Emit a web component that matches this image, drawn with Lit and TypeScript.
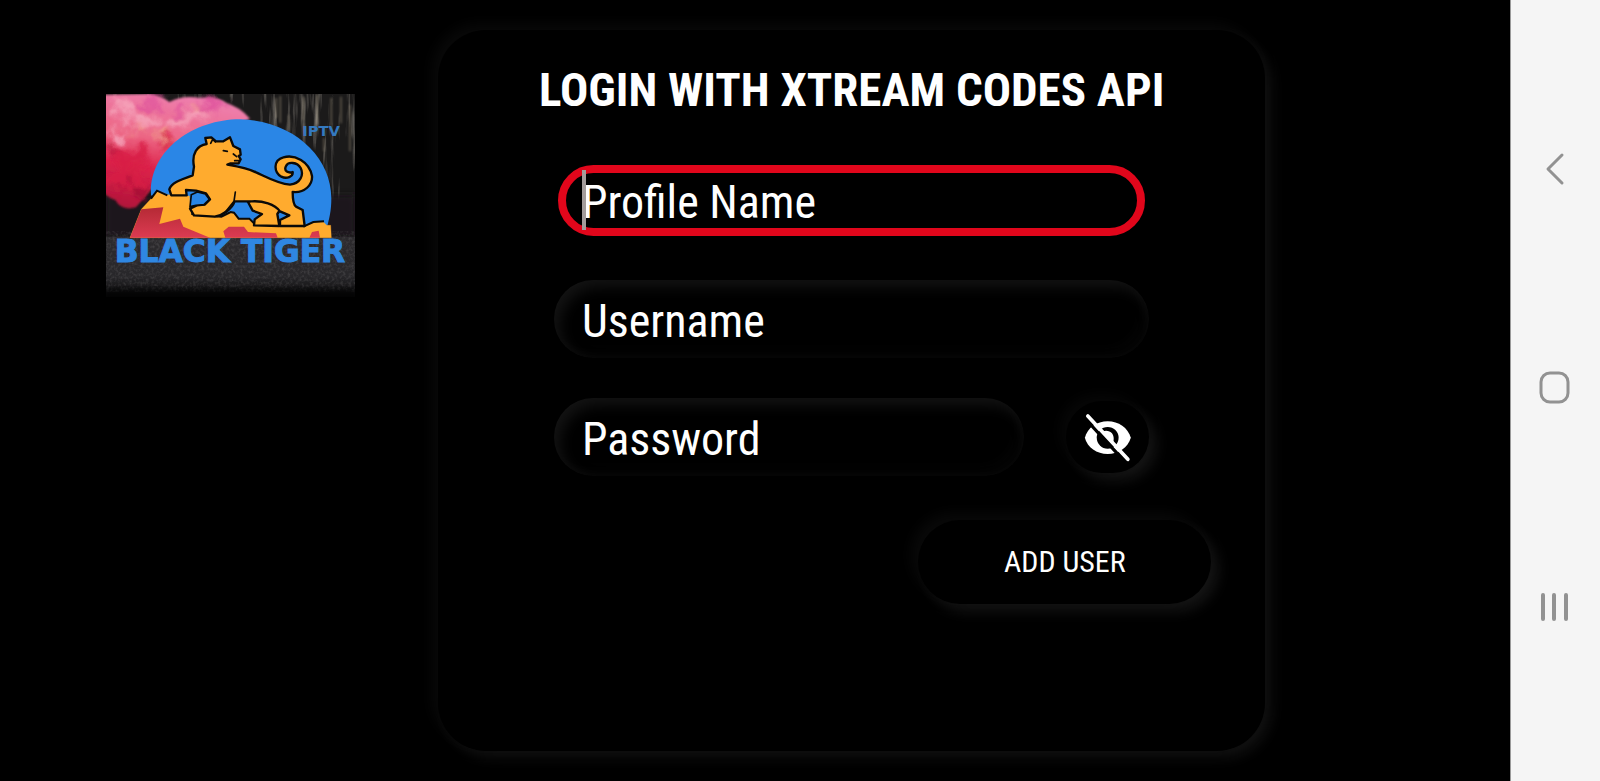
import { LitElement, html, css, svg } from "lit";
import { customElement, state } from "lit/decorators.js";

@customElement("brand-logo")
class BrandLogo extends LitElement {
  static styles = css`
    :host { display: block; }
    svg { display: block; width: 100%; height: auto; }
    .word { font-family: "DejaVu Sans", sans-serif; font-weight: 700; fill: #2f87e2; }
    .name { font-size: 94px; stroke: #2f87e2; stroke-width: 3; }
    .tag { font-size: 44px; fill: #3479bf; }
  `;

  render() {
    return html`<svg viewBox="30 28 747 609" role="img" aria-label="Black Tiger IPTV">
      ${svg`
      <defs>
        <linearGradient id="ground" x1="0" y1="0" x2="0" y2="1">
          <stop offset="0" stop-color="#2c2a2d"/><stop offset=".65" stop-color="#28272a"/><stop offset="1" stop-color="#0b0b0c"/>
        </linearGradient>
        <linearGradient id="smoke" x1=".5" y1="0" x2=".25" y2="1">
          <stop offset="0" stop-color="#ee7fae"/><stop offset=".4" stop-color="#ec6684"/>
          <stop offset=".65" stop-color="#dd234b"/><stop offset="1" stop-color="#b3163b"/>
        </linearGradient>
        <linearGradient id="rock" x1="0" y1="0" x2="0" y2="1">
          <stop offset="0" stop-color="#b52a35"/><stop offset="1" stop-color="#dc3b52"/>
        </linearGradient>
        <filter id="soft" x="-20%" y="-20%" width="140%" height="140%"><feGaussianBlur stdDeviation="9"/></filter>
        <filter id="edge" x="-10%" y="-10%" width="120%" height="120%"><feGaussianBlur stdDeviation="3"/></filter>
        <filter id="billow" x="-20%" y="-20%" width="140%" height="140%">
          <feGaussianBlur stdDeviation="9" result="b"/>
          <feTurbulence type="fractalNoise" baseFrequency=".018" numOctaves="3" seed="12"/>
          <feDisplacementMap in="b" scale="90" xChannelSelector="R" yChannelSelector="G"/>
        </filter>
        <filter id="bark" x="0" y="0" width="100%" height="100%">
          <feTurbulence type="fractalNoise" baseFrequency=".06 .006" numOctaves="3" seed="4"/>
          <feColorMatrix values="0 0 0 0 .5  0 0 0 0 .46  0 0 0 0 .4  2.6 0 0 0 -1.4"/>
          <feGaussianBlur stdDeviation="1.5"/>
        </filter>
        <filter id="grit" x="0" y="0" width="100%" height="100%">
          <feTurbulence type="fractalNoise" baseFrequency=".12" numOctaves="2" seed="9"/>
          <feColorMatrix values="0 0 0 0 .5  0 0 0 0 .48  0 0 0 0 .48  1.2 0 0 0 -.5"/>
          <feGaussianBlur stdDeviation="2"/>
        </filter>
        <clipPath id="frame"><rect x="30" y="28" width="747" height="609"/></clipPath>
      </defs>
      <g clip-path="url(#frame)">
        <rect x="30" y="28" width="747" height="432" fill="#1b1a1a"/>
        <rect x="400" y="28" width="377" height="330" filter="url(#bark)" opacity=".6"/>
        <rect x="30" y="28" width="400" height="60" filter="url(#bark)" opacity=".4"/>
        <g stroke="#b9ab90" stroke-width="4" opacity=".5" filter="url(#edge)">
          <path d="M541 40v60M553 34v80M622 36v70M664 30v90M706 40v85M735 36v80M762 60v140M684 160v40M578 90v50"/>
        </g>
        <rect x="30" y="330" width="747" height="130" fill="#1a191b" filter="url(#soft)"/>
        <rect x="30" y="456" width="747" height="181" fill="url(#ground)"/>
        <rect x="30" y="440" width="747" height="180" filter="url(#grit)" opacity=".3"/>
        <path d="M70 340v110" stroke="#5a3e4c" stroke-width="16" filter="url(#soft)" opacity=".7"/>
        <path d="M20 30L160 28Q200 34 220 52Q262 30 310 40Q370 36 392 56Q430 66 462 102L400 130L240 200L170 310L120 368Q76 380 58 346Q36 340 20 320Z" fill="url(#smoke)" filter="url(#edge)"/>
        <g filter="url(#billow)" opacity=".85">
          <g fill="#f6a6bb"><ellipse cx="90" cy="76" rx="46" ry="24"/><ellipse cx="150" cy="112" rx="34" ry="20"/><ellipse cx="240" cy="112" rx="38" ry="18"/><ellipse cx="62" cy="150" rx="34" ry="22"/><ellipse cx="300" cy="96" rx="34" ry="16"/></g>
          <g fill="#f3a08f"><ellipse cx="205" cy="150" rx="26" ry="14"/><ellipse cx="310" cy="72" rx="22" ry="10"/><ellipse cx="130" cy="140" rx="20" ry="10"/></g>
          <g fill="#de4f9b"><ellipse cx="170" cy="56" rx="26" ry="12"/><ellipse cx="350" cy="66" rx="40" ry="16"/><ellipse cx="246" cy="78" rx="22" ry="10"/></g>
          <g fill="#d81f45"><ellipse cx="214" cy="172" rx="24" ry="16"/><ellipse cx="100" cy="222" rx="56" ry="26"/><ellipse cx="90" cy="280" rx="60" ry="34"/></g>
          <g fill="#a30f34"><ellipse cx="120" cy="306" rx="36" ry="18"/><ellipse cx="60" cy="200" rx="22" ry="7"/></g>
        </g>
        <path d="M165 330C158 200 290 104 432 104C592 108 706 216 706 340C706 380 700 400 690 440H240Z" fill="#2a86e6"/>
        <path d="M102 459L136 374L165 342L183 318L214 330L280 334L286 388L380 396L404 382L414 384L428 402L460 402L476 418L622 426L652 412L680 410L692 422H704L706 459Z" fill="#ffab2e" stroke="#ffab2e"/>
        <path d="M102 459L136 374L202 368L190 418L252 402L262 426L342 459ZM382 440L398 426H444L456 442L540 446L545 459H388ZM640 459L648 442L668 438L672 459Z" fill="url(#rock)"/>
        <path d="M165 342L183 318L214 332M286 388L376 396L404 382L414 384L428 402L460 402L476 418M622 426L652 412L684 410" fill="none" stroke="#0b0a08" stroke-width="6"/>
        <g fill="#ffab2e" stroke="#0b0a08" stroke-width="7" stroke-linejoin="round" stroke-linecap="round">
          <path d="M456 352L470 378L498 388L476 404L474 422L550 424L544 388L552 376L520 330Z"/>
          <path d="M328 160L346 158L360 170L382 170L402 158L412 184L432 194L434 210L428 214L434 224L428 236L404 236L394 240C430 246 460 252 482 264C516 280 548 298 582 300C614 296 624 270 614 250C604 232 576 230 570 244C562 260 578 266 590 262C592 276 572 284 556 276C532 262 532 226 562 218C596 208 640 230 648 274C650 300 626 326 590 322C590 340 592 360 600 366L620 376L626 424L552 424L552 406L580 392L552 380C536 358 500 348 468 350L416 350C408 372 382 392 356 396L294 392L282 372L302 362L326 360L342 344L330 326L300 318L270 316L272 332L226 332L220 314C226 296 250 286 290 272L294 246C286 206 304 182 332 178Z"/>
          <path d="M418 322L414 350L388 382M344 176L350 164L358 172M382 198L394 200M412 208L422 216M416 228H428" fill="none" stroke-width="5"/>
        </g>
        <path d="M286 330L304 322L328 328L340 344L324 360L300 362L282 366Z" fill="#2a86e6" stroke="#0b0a08" stroke-width="5"/>
        <text class="word tag" x="619" y="154">IPTV</text>
        <text class="word name" x="56" y="531">BLACK TIGER</text>
        <rect x="20" y="612" width="767" height="40" fill="#000" opacity=".7" filter="url(#soft)"/>
      </g>`}
    </svg>`;
  }
}

@customElement("app-root")
class AppRoot extends LitElement {
  static styles = css`
    :host { display: block; font-family: "Roboto Condensed", Roboto, sans-serif; color: #fff; background: #000; }
    * { box-sizing: border-box; }
    .screen { display: grid; grid-template-columns: 1fr 90px; min-height: 100vh; }
    main { display: grid; grid-template-columns: 29% 54.8% 1fr; }
    .side { padding: 94px 0 0 106px; }
    .logo { width: 249px; }
    .panel {
      margin: 30px 0; padding: 32px 54px; border-radius: 48px; background: #000;
      box-shadow: -6px -6px 14px #090909, 6px 6px 14px #131313;
    }
    h1 { margin: 0; font-size: 47px; line-height: 56px; font-weight: 700; text-align: center; white-space: nowrap; }
    form { display: flex; flex-direction: column; gap: 40px; padding-top: 44px; }
    .row { display: flex; gap: 42px; margin: 0 62px; }
    .field { flex: 1; min-width: 0; position: relative; }
    .text {
      display: block; width: 100%; height: 78px; padding: 4px 28px 0; border: 0; border-radius: 39px; outline: 0;
      background: #000; color: #fff; font: inherit; font-size: 46px;
      box-shadow: inset 6px 7px 14px #131313, inset -6px -6px 14px #060606;
    }
    .text::placeholder { color: #fff; opacity: 1; }
    .active { padding: 3px 4px 4px; }
    .active .text { height: 71px; padding: 2px 16px 0; border: 8px solid #e1061b; border-radius: 36px; box-shadow: none; }
    .caret { position: absolute; left: 28px; top: 8px; width: 4px; height: 60px; background: #a39c9b; }
    button { border: 0; padding: 0; background: #000; color: inherit; font: inherit; }
    .eye {
      display: grid; place-items: center; width: 83px; height: 72px; margin-top: 3px; border-radius: 36px;
      box-shadow: -6px -6px 14px #070707, 7px 7px 14px #161616;
    }
    .eye svg { width: 48px; height: 49px; }
    .add {
      align-self: flex-end; width: 293px; height: 84px; margin-top: 4px; border-radius: 42px; font-size: 30px; line-height: 36px;
      box-shadow: -7px -7px 14px #090909, 7px 7px 14px #161616;
    }
    nav {
      display: flex; flex-direction: column; justify-content: space-between; align-items: center;
      padding: 149px 2px 153px 0; border-left: 1px solid #9a9a9a; background: #f5f5f5;
    }
    nav button { width: 40px; height: 40px; background: none; }
    nav svg { display: block; width: 40px; height: 40px; fill: none; stroke: #929292; stroke-width: 3; stroke-linecap: round; stroke-linejoin: round; }
    nav .bars { stroke-width: 4; }
  `;

  @state() private visible = false;

  private toggle() {
    this.visible = !this.visible;
  }

  render() {
    return html`
      <div class="screen">
        <main>
          <div class="side"><brand-logo class="logo"></brand-logo></div>
          <section class="panel">
            <h1>LOGIN WITH XTREAM CODES API</h1>
            <form @submit=${(e: Event) => e.preventDefault()}>
              <div class="row">
                <div class="field active">
                  <input class="text" type="text" placeholder="Profile Name" aria-label="Profile Name" />
                  <span class="caret"></span>
                </div>
              </div>
              <div class="row">
                <div class="field">
                  <input class="text" type="text" placeholder="Username" aria-label="Username" />
                </div>
              </div>
              <div class="row">
                <div class="field">
                  <input class="text" type=${this.visible ? "text" : "password"} placeholder="Password" aria-label="Password" />
                </div>
                <button class="eye" type="button" aria-label="Show password" @click=${this.toggle}>
                  <svg viewBox="30 22 144 148" fill="#fff">
                    <path d="M32 97C40 66 68 47 101 47C134 47 162 66 171 97C162 127 134 146 101 146C68 146 40 127 32 97Z" />
                    <circle cx="101" cy="97" r="33" fill="#000" />
                    <path d="M85 78C94 73 108 75 114 83C121 92 120 104 117 113Z" />
                    <path d="M32 38L152 168" stroke="#000" stroke-width="10" />
                    <path d="M41 31L162 162" stroke="#fff" stroke-width="11" stroke-linecap="round" />
                  </svg>
                </button>
              </div>
              <button class="add" type="submit">ADD USER</button>
            </form>
          </section>
        </main>
        <nav aria-label="System">
          <button aria-label="Back"><svg viewBox="0 0 40 40"><path d="M27 6L13 20L27 34" /></svg></button>
          <button aria-label="Home"><svg viewBox="0 0 40 40"><rect x="6" y="4" width="27" height="29" rx="9" /></svg></button>
          <button aria-label="Recent apps"><svg class="bars" viewBox="0 0 40 40"><path d="M8 7V31M19 7V31M31 7V31" /></svg></button>
        </nav>
      </div>
    `;
  }
}
